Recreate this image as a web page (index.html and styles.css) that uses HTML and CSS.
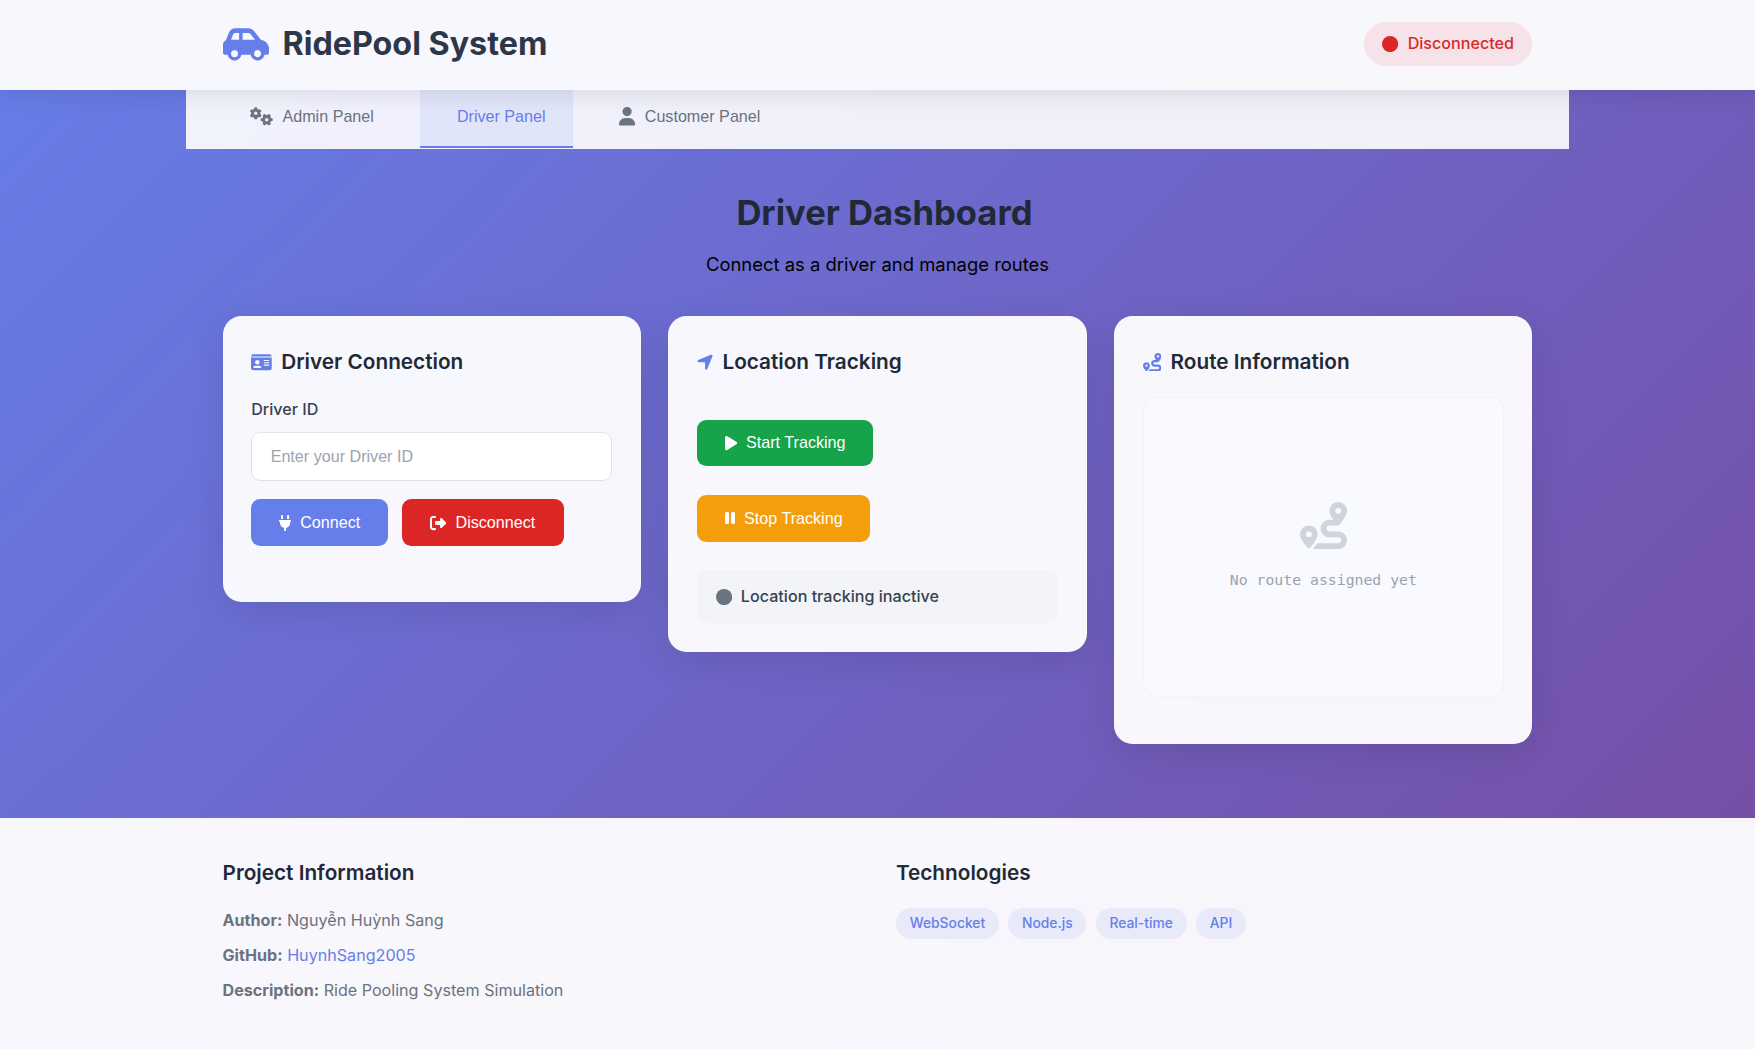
FILE: index.html
```html
<!DOCTYPE html>
<html lang="en">
<head>
<meta charset="UTF-8">
<title>RidePool System</title>
<link rel="stylesheet" href="styles.css">
</head>
<body>
<svg class="sprite" aria-hidden="true">
  <symbol id="route" viewBox="0 0 512 512"><path d="M512 96c0 50.2-59.1 125.1-84.6 155c-3.8 4.4-9.4 6.1-14.5 5H320c-17.7 0-32 14.3-32 32s14.3 32 32 32h96c53 0 96 43 96 96s-43 96-96 96H139.6c8.7-9.9 19.3-22.6 30-36.8c6.3-8.4 12.8-17.6 19-27.2H416c17.7 0 32-14.3 32-32s-14.3-32-32-32H320c-53 0-96-43-96-96s43-96 96-96h39.8c-21-31.5-39.8-67.7-39.8-96c0-53 43-96 96-96s96 43 96 96zM117.1 489.1c-3.8 4.3-7.2 8.1-10.1 11.3l-1.8 2-.2-.2c-6 4.6-14.6 4-20-1.8C59.8 473 0 402.5 0 352c0-53 43-96 96-96s96 43 96 96c0 30-21.1 67-43.5 97.9c-10.7 14.7-21.7 28-30.8 38.5l-.6 .7zM128 352a32 32 0 1 0 -64 0 32 32 0 1 0 64 0zM416 128a32 32 0 1 0 0-64 32 32 0 1 0 0 64z"/></symbol>
</svg>

<header class="header">
  <div class="header-content">
    <h1 class="logo">
      <svg class="icon" viewBox="0 0 640 512"><path d="M171.3 96H224v96H111.3l30.4-75.9C146.5 104 158.2 96 171.3 96zM272 192V96h81.2c9.7 0 18.9 4.4 25 12l67 84H272zm256.2 1L428.2 68c-18.2-22.8-45.8-36-75-36H171.3c-39.3 0-74.6 23.9-89.1 60.3L40.6 196.4C16.8 205.8 0 228.9 0 256V368c0 17.7 14.3 32 32 32H65.3c7.6 45.4 47.1 80 94.7 80s87.1-34.6 94.7-80H385.3c7.6 45.4 47.1 80 94.7 80s87.1-34.6 94.7-80H608c17.7 0 32-14.3 32-32V320c0-65.2-48.8-119-111.8-127zM434.7 368a48 48 0 1 1 90.5 32 48 48 0 1 1 -90.5-32zM160 336a48 48 0 1 1 0 96 48 48 0 1 1 0-96z"/></svg>
      <span>RidePool System</span>
    </h1>
    <div class="status-badge">
      <svg class="icon" viewBox="0 0 512 512"><circle cx="256" cy="256" r="256"/></svg>
      <span>Disconnected</span>
    </div>
  </div>
</header>

<nav class="tabs">
  <button class="tab">
    <svg class="icon" viewBox="0 0 640 512"><path d="M308.5 135.3c7.1-6.3 9.9-16.2 6.2-25c-2.3-5.3-4.8-10.5-7.6-15.5L304 89.4c-3-5-6.3-9.9-9.8-14.6c-5.7-7.6-15.7-10.1-24.7-7.1l-28.2 9.3c-10.7-8.8-23-16-36.2-20.9L199 27.1c-1.9-9.3-9.1-16.7-18.5-17.8C173.9 8.4 167.2 8 160.4 8h-.7c-6.8 0-13.5 .4-20.1 1.2c-9.4 1.1-16.6 8.6-18.5 17.8L115 56.1c-13.3 5-25.5 12.1-36.2 20.9L50.5 67.8c-9-3-19-.5-24.7 7.1c-3.5 4.7-6.8 9.6-9.9 14.6l-3 5.3c-2.8 5-5.3 10.2-7.6 15.6c-3.7 8.7-.9 18.6 6.2 25l22.2 19.8C32.6 161.9 32 168.9 32 176s.6 14.1 1.7 20.9L11.5 216.7c-7.1 6.3-9.9 16.2-6.2 25c2.3 5.3 4.8 10.5 7.6 15.6l3 5.2c3 5.1 6.3 9.9 9.9 14.6c5.7 7.6 15.7 10.1 24.7 7.1l28.2-9.3c10.7 8.8 23 16 36.2 20.9l6.1 29.1c1.9 9.3 9.1 16.7 18.5 17.8c6.7 .8 13.5 1.2 20.4 1.2s13.7-.4 20.4-1.2c9.4-1.1 16.6-8.6 18.5-17.8l6.1-29.1c13.3-5 25.5-12.1 36.2-20.9l28.2 9.3c9 3 19 .5 24.7-7.1c3.5-4.7 6.8-9.5 9.8-14.6l3.1-5.4c2.8-5 5.3-10.2 7.6-15.5c3.7-8.7 .9-18.6-6.2-25l-22.2-19.8c1.1-6.8 1.7-13.8 1.7-20.9s-.6-14.1-1.7-20.9l22.2-19.8zM112 176a48 48 0 1 1 96 0 48 48 0 1 1 -96 0zM504.7 500.5c6.3 7.1 16.2 9.9 25 6.2c5.3-2.3 10.5-4.8 15.5-7.6l5.4-3.1c5-3 9.9-6.3 14.6-9.8c7.6-5.7 10.1-15.7 7.1-24.7l-9.3-28.2c8.8-10.7 16-23 20.9-36.2l29.1-6.1c9.3-1.9 16.7-9.1 17.8-18.5c.8-6.7 1.2-13.5 1.2-20.4s-.4-13.7-1.2-20.4c-1.1-9.4-8.6-16.6-17.8-18.5L583.9 307c-5-13.3-12.1-25.5-20.9-36.2l9.3-28.2c3-9 .5-19-7.1-24.7c-4.7-3.5-9.6-6.8-14.6-9.9l-5.3-3c-5-2.8-10.2-5.3-15.6-7.6c-8.7-3.7-18.6-.9-25 6.2l-19.8 22.2c-6.8-1.1-13.8-1.7-20.9-1.7s-14.1 .6-20.9 1.7l-19.8-22.2c-6.3-7.1-16.2-9.9-25-6.2c-5.3 2.3-10.5 4.8-15.6 7.6l-5.2 3c-5.1 3-9.9 6.3-14.6 9.9c-7.6 5.7-10.1 15.7-7.1 24.7l9.3 28.2c-8.8 10.7-16 23-20.9 36.2L315.1 313c-9.3 1.9-16.7 9.1-17.8 18.5c-.8 6.7-1.2 13.5-1.2 20.4s.4 13.7 1.2 20.4c1.1 9.4 8.6 16.6 17.8 18.5l29.1 6.1c5 13.3 12.1 25.5 20.9 36.2l-9.3 28.2c-3 9-.5 19 7.1 24.7c4.7 3.5 9.5 6.8 14.6 9.8l5.4 3.1c5 2.8 10.2 5.3 15.5 7.6c8.7 3.7 18.6 .9 25-6.2l19.8-22.2c6.8 1.1 13.8 1.7 20.9 1.7s14.1-.6 20.9-1.7l19.8 22.2zM464 304a48 48 0 1 1 0 96 48 48 0 1 1 0-96z"/></svg>
    <span>Admin Panel</span>
  </button>
  <button class="tab tab-active"><i></i><span>Driver Panel</span></button>
  <button class="tab">
    <svg class="icon icon-448" viewBox="0 0 448 512"><path d="M224 256A128 128 0 1 0 224 0a128 128 0 1 0 0 256zm-45.7 48C79.8 304 0 383.8 0 482.3C0 498.7 13.3 512 29.7 512H418.3c16.4 0 29.7-13.3 29.7-29.7C448 383.8 368.2 304 269.7 304H178.3z"/></svg>
    <span>Customer Panel</span>
  </button>
</nav>

<main class="main">
  <div class="panel-header">
    <h2 class="panel-title"><i></i><span>Driver Dashboard</span></h2>
    <p class="panel-subtitle">Connect as a driver and manage routes</p>
  </div>
  <div class="cards">
    <section class="card card-connection">
      <h3 class="card-title">
        <svg class="icon" viewBox="0 0 576 512"><path d="M0 96l576 0c0-35.3-28.7-64-64-64H64C28.7 32 0 60.7 0 96zm0 32V416c0 35.3 28.7 64 64 64H512c35.3 0 64-28.7 64-64V128H0zM64 405.3c0-29.5 23.9-53.3 53.3-53.3H234.7c29.5 0 53.3 23.9 53.3 53.3c0 5.9-4.8 10.7-10.7 10.7H74.7c-5.9 0-10.7-4.8-10.7-10.7zM176 192a64 64 0 1 1 0 128 64 64 0 1 1 0-128zm176 16c0-8.8 7.2-16 16-16H496c8.8 0 16 7.2 16 16s-7.2 16-16 16H368c-8.8 0-16-7.2-16-16zm0 64c0-8.8 7.2-16 16-16H496c8.8 0 16 7.2 16 16s-7.2 16-16 16H368c-8.8 0-16-7.2-16-16zm0 64c0-8.8 7.2-16 16-16H496c8.8 0 16 7.2 16 16s-7.2 16-16 16H368c-8.8 0-16-7.2-16-16z"/></svg>
        <span>Driver Connection</span>
      </h3>
      <label class="label" for="driver-id">Driver ID</label>
      <input class="input" id="driver-id" type="text" placeholder="Enter your Driver ID">
      <div class="button-row">
        <button class="btn btn-primary">
          <svg class="icon" viewBox="0 0 384 512"><path d="M96 0C78.3 0 64 14.3 64 32v96h64V32c0-17.7-14.3-32-32-32zM288 0c-17.7 0-32 14.3-32 32v96h64V32c0-17.7-14.3-32-32-32zM32 160c-17.7 0-32 14.3-32 32s14.3 32 32 32v32c0 77.4 55 142 128 156.8V480c0 17.7 14.3 32 32 32s32-14.3 32-32V412.8C297 398 352 333.4 352 256V224c17.7 0 32-14.3 32-32s-14.3-32-32-32H32z"/></svg>
          <span>Connect</span>
        </button>
        <button class="btn btn-danger">
          <svg class="icon" viewBox="0 0 512 512"><path d="M377.9 105.9L500.7 228.7c7.2 7.2 11.3 17.1 11.3 27.3s-4.1 20.1-11.3 27.3L377.9 406.1c-6.4 6.4-15 9.9-24 9.9c-18.7 0-33.9-15.2-33.9-33.9l0-62.1-128 0c-17.7 0-32-14.3-32-32l0-64c0-17.7 14.3-32 32-32l128 0 0-62.1c0-18.7 15.2-33.9 33.9-33.9c9 0 17.6 3.6 24 9.9zM160 96L96 96c-17.7 0-32 14.3-32 32l0 256c0 17.7 14.3 32 32 32l64 0c17.7 0 32 14.3 32 32s-14.3 32-32 32l-64 0c-53 0-96-43-96-96L0 128C0 75 43 32 96 32l64 0c17.7 0 32 14.3 32 32s-14.3 32-32 32z"/></svg>
          <span>Disconnect</span>
        </button>
      </div>
    </section>

    <section class="card">
      <h3 class="card-title">
        <svg class="icon" viewBox="0 0 448 512"><path d="M429.6 92.1c4.9-11.9 2.1-25.6-7-34.7s-22.8-11.9-34.7-7l-352 144c-14.2 5.8-22.2 20.8-19.3 35.8s16.1 25.8 31.4 25.8H224V432c0 15.3 10.8 28.4 25.8 31.4s30-5.1 35.8-19.3l144-352z"/></svg>
        <span>Location Tracking</span>
      </h3>
      <div class="tracking">
        <button class="btn btn-success">
          <svg class="icon" viewBox="0 0 384 512"><path d="M73 39c-14.8-9.1-33.4-9.4-48.5-.9S0 62.6 0 80V432c0 17.4 9.4 33.4 24.5 41.9s33.7 8.1 48.5-.9L361 297c14.3-8.7 23-24.2 23-41s-8.7-32.2-23-41L73 39z"/></svg>
          <span>Start Tracking</span>
        </button>
        <button class="btn btn-warning">
          <svg class="icon" viewBox="0 0 320 512"><path d="M48 64C21.5 64 0 85.5 0 112V400c0 26.5 21.5 48 48 48H80c26.5 0 48-21.5 48-48V112c0-26.5-21.5-48-48-48H48zm192 0c-26.5 0-48 21.5-48 48V400c0 26.5 21.5 48 48 48h32c26.5 0 48-21.5 48-48V112c0-26.5-21.5-48-48-48H240z"/></svg>
          <span>Stop Tracking</span>
        </button>
        <div class="tracking-status">
          <svg class="icon" viewBox="0 0 512 512"><circle cx="256" cy="256" r="256"/></svg>
          <span>Location tracking inactive</span>
        </div>
      </div>
    </section>

    <section class="card card-route">
      <h3 class="card-title">
        <svg class="icon" viewBox="0 0 512 512"><use href="#route"/></svg>
        <span>Route Information</span>
      </h3>
      <div class="route-box">
        <svg class="icon" viewBox="0 0 512 512"><use href="#route"/></svg>
        <p>No route assigned yet</p>
      </div>
    </section>
  </div>
</main>

<footer class="footer">
  <div class="footer-content">
    <section>
      <h3 class="footer-title">Project Information</h3>
      <p class="footer-line"><strong>Author:</strong> Nguyễn Huỳnh Sang</p>
      <p class="footer-line"><strong>GitHub:</strong> <a href="#">HuynhSang2005</a></p>
      <p class="footer-line"><strong>Description:</strong> Ride Pooling System Simulation</p>
    </section>
    <section>
      <h3 class="footer-title">Technologies</h3>
      <div class="tags">
        <span class="tag">WebSocket</span>
        <span class="tag">Node.js</span>
        <span class="tag">Real-time</span>
        <span class="tag">API</span>
      </div>
    </section>
  </div>
</footer>
</body>
</html>
```
FILE: styles.css
```css
html {
  font-size: 18.45px;
}

* {
  box-sizing: border-box;
  margin: 0;
  padding: 0;
}

body {
  display: flex;
  flex-direction: column;
  min-height: 100vh;
  overflow: hidden;
  font-family: Inter, "Noto Sans", sans-serif;
  line-height: 1.6;
  background: linear-gradient(135deg, #667eea 0%, #764ba2 100%);
}

button,
input {
  font-family: "Liberation Sans", Arial, sans-serif;
  font-size: 0.875rem;
}

.sprite {
  display: none;
}

.icon {
  height: 1em;
  flex: none;
  fill: currentColor;
}

/* Header */
.header {
  position: relative;
  z-index: 1;
  height: 89.6px;
  background: rgba(255, 255, 255, 0.95);
  box-shadow: 0 4px 23px rgba(0, 0, 0, 0.1);
}

.header-content {
  display: flex;
  align-items: center;
  justify-content: space-between;
  max-width: 75rem;
  height: 88.6px;
  margin: 0 auto;
  padding: 0 2rem;
}

.logo {
  display: flex;
  align-items: center;
  gap: 0.75rem;
  font-size: 1.75rem;
  font-weight: 700;
  color: #2d3748;
}

.logo .icon {
  height: 2rem;
  color: #667eea;
}

.status-badge {
  display: flex;
  align-items: center;
  gap: 0.5rem;
  padding: 0.5rem 1rem;
  border-radius: 2rem;
  font-size: 0.875rem;
  font-weight: 500;
  color: #dc2626;
  background: rgba(229, 38, 48, 0.09);
}

/* Navigation */
.tabs {
  display: flex;
  gap: 1rem;
  width: 75rem;
  height: 59px;
  margin: 0 auto;
  padding: 0 2rem;
  border-bottom: 1px solid rgba(255, 255, 255, 0.2);
  background: rgba(255, 255, 255, 0.9);
}

.tab {
  display: flex;
  align-items: center;
  gap: 0.5rem;
  padding: 0 1.5rem 2px;
  border: 0;
  border-bottom: 2px solid transparent;
  color: #6b7280;
  background: none;
}

.tab .icon {
  height: 1rem;
}

.tab-active {
  color: #667eea;
  border-bottom-color: #667eea;
  background: rgba(102, 126, 234, 0.1);
}

/* Panel */
.main {
  width: 75rem;
  margin: 0 auto;
  padding: 2rem 2rem 4rem;
}

.panel-header {
  margin-bottom: 2rem;
  text-align: center;
}

.panel-title {
  display: flex;
  justify-content: center;
  gap: 0.75rem;
  margin-bottom: 0.5rem;
  font-size: 1.875rem;
  font-weight: 700;
  color: #1f2937;
}

.cards {
  display: grid;
  grid-template-columns: repeat(3, 1fr);
  align-items: start;
  gap: 1.5rem;
}

.card {
  padding: 1.5rem;
  border: 1px solid rgba(255, 255, 255, 0.2);
  border-radius: 1rem;
  background: rgba(255, 255, 255, 0.95);
  box-shadow: 0 9px 37px rgba(0, 0, 0, 0.1);
}

.card-connection {
  padding-bottom: 3rem;
}

.card-route {
  padding-bottom: 2.5rem;
}

.card-title {
  display: flex;
  align-items: center;
  gap: 0.5rem;
  margin-bottom: 1rem;
  font-size: 1.125rem;
  font-weight: 600;
  color: #1f2937;
}

.card-title .icon {
  height: 1rem;
  color: #667eea;
}

.label {
  display: block;
  margin-bottom: 0.5rem;
  font-size: 0.875rem;
  font-weight: 500;
  color: #374151;
}

.input {
  display: block;
  width: 100%;
  height: 49px;
  margin-bottom: 1rem;
  padding: 0 1rem;
  border: 1px solid #e0e2e8;
  border-radius: 0.5rem;
  background: #fff;
}

.input::placeholder {
  color: #9ca3af;
}

.button-row {
  display: flex;
  gap: 0.75rem;
}

.btn {
  display: flex;
  align-items: center;
  gap: 0.5rem;
  height: 46.8px;
  padding: 0 1.5rem;
  border: 0;
  border-radius: 0.5rem;
  font-weight: 500;
  color: #fff;
}

.btn-primary { background: #667eea; }
.btn-danger { padding: 0 1.54rem; background: #dc2626; }
.btn-success { background: #16a34a; }
.btn-warning { background: #f59e0b; }

.tracking {
  display: flex;
  flex-direction: column;
  align-items: flex-start;
  gap: 28.5px;
  padding-top: 22.8px;
}

.tracking-status {
  display: flex;
  align-items: center;
  gap: 0.5rem;
  width: 100%;
  height: 53px;
  padding: 0 1rem;
  border-radius: 0.5rem;
  font-size: 0.875rem;
  font-weight: 500;
  color: #374151;
  background: #f3f4f8;
}

.tracking-status .icon {
  color: #6b7280;
}

.route-box {
  display: flex;
  flex-direction: column;
  align-items: center;
  justify-content: center;
  gap: 1rem;
  height: 300.6px;
  border: 1px solid #f1f3f8;
  border-radius: 0.75rem;
  font-family: "DejaVu Sans Mono", "Liberation Mono", monospace;
  font-size: 14.8px;
  color: #9ca3af;
  background: #f8faff;
}

.route-box .icon {
  height: 2.55rem;
  color: #d1d5db;
}

/* Footer */
.footer {
  flex: 1;
  padding: 2rem 0;
  border-top: 1px solid rgba(255, 255, 255, 0.2);
  background: rgba(255, 255, 255, 0.95);
}

.footer-content {
  display: grid;
  grid-template-columns: 1fr 1fr;
  gap: 2rem;
  width: 75rem;
  margin: 0 auto;
  padding: 0 2rem;
}

.footer-title {
  margin-bottom: 1rem;
  font-size: 1.125rem;
  font-weight: 600;
  color: #1f2937;
}

.footer-line {
  margin-bottom: 0.5rem;
  font-size: 0.875rem;
  color: #6b7280;
}

.footer-line a {
  color: #667eea;
  text-decoration: none;
}

.tags {
  display: flex;
  gap: 0.5rem;
}

.tag {
  padding: 0.25rem 0.75rem;
  border-radius: 1rem;
  font-size: 0.75rem;
  font-weight: 500;
  color: #667eea;
  background: rgba(102, 126, 234, 0.1);
}
```
